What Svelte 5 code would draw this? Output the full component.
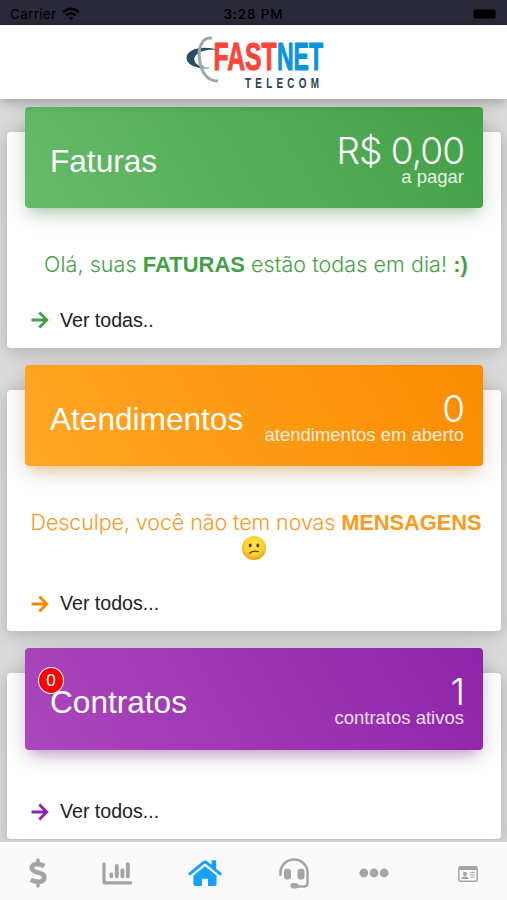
<script lang="ts">
  type Card = {
    title: string;
    tone: string;
    value: string;
    label: string;
    link: string;
    badge?: number;
  };

  const cards: Card[] = [
    { title: "Faturas", tone: "green", value: "R$ 0,00", label: "a pagar", link: "Ver todas.." },
    { title: "Atendimentos", tone: "orange", value: "0", label: "atendimentos em aberto", link: "Ver todos..." },
    { title: "Contratos", tone: "purple", value: "1", label: "contratos ativos", link: "Ver todos...", badge: 0 },
  ];

  const tabs = ["dollar", "chart", "home", "headset", "more", "profile"];
  let active = $state("home");
</script>

<div class="app">
  <div class="status">
    <div class="carrier">
      <span>Carrier</span>
      <svg width="18" height="14" viewBox="0 0 18 14" fill="none" stroke="#000" stroke-width="2.5">
        <path d="M1.2 5.2Q9-1.7 16.8 5.2M4.2 8.4Q9 4.1 13.8 8.4" />
        <path d="M6.6 10.7Q9 8.8 11.4 10.7L9 13.3Z" fill="#000" stroke="none" />
      </svg>
    </div>
    <span class="time">3:28 PM</span>
    <div class="power"><span class="battery"></span></div>
  </div>

  <header>
    <svg width="140" height="56" viewBox="0 0 140 56">
      <path d="M31 13C16 9.5 2.5 14 2.5 22C2.5 28 10 32 21 32.5C12 29 8.500 25 11 20.500C14 15.500 22 13 31 13.800Z" fill="#294b68" />
      <path d="M28 2.3C18 .5 14 12 15.5 23C17 36 23 45 34 45" fill="none" stroke="#97aaa5" stroke-width="3" />
      <path d="M17 29Q20 33 25 32" fill="none" stroke="#97aaa5" stroke-width="1.6" />
      <text x="29.5" y="33.5" textLength="63" lengthAdjust="spacingAndGlyphs" class="logo fast">FAST</text>
      <text x="93" y="33.5" textLength="46" lengthAdjust="spacingAndGlyphs" class="logo net">NET</text>
      <text transform="translate(61 51.5) scale(.66 1)" textLength="112" class="telecom">TELECOM</text>
    </svg>
  </header>

  <main>
    {#each cards as card}
      <section class="card {card.tone}">
        <div class="head">
          {#if card.badge !== undefined}
            <span class="badge">{card.badge}</span>
          {/if}
          <h2>{card.title}</h2>
          <div class="total">
            <span class="value">{card.value}</span>
            <span class="label">{card.label}</span>
          </div>
        </div>
        {#if card.tone === "green"}
          <p>Olá, suas <b>FATURAS</b> estão todas em dia! <b>:)</b></p>
        {:else if card.tone === "orange"}
          <p>Desculpe, você não tem novas <b>MENSAGENS</b></p>
          <svg class="emoji" width="24" height="24" viewBox="0 0 24 24">
            <defs>
              <radialGradient id="face" cx=".5" cy=".4" r=".6">
                <stop offset="0" stop-color="#ffea55" />
                <stop offset=".65" stop-color="#ffd12e" />
                <stop offset="1" stop-color="#ec9a10" />
              </radialGradient>
            </defs>
            <circle cx="12" cy="12" r="12" fill="url(#face)" />
            <ellipse cx="8.2" cy="9.4" rx="1.4" ry="1.9" fill="#5b3406" />
            <ellipse cx="15.8" cy="9.4" rx="1.4" ry="1.9" fill="#5b3406" />
            <path d="M7.7 17.2Q11 14 16.2 15.6" fill="none" stroke="#6b3d08" stroke-width="1.3" stroke-linecap="round" />
          </svg>
        {/if}
        <div class="link">
          <svg width="18" height="18" viewBox="0 0 18 18" fill="none" stroke="currentColor" stroke-width="2.8">
            <path d="M.5 9H16M8.3 1.5L15.8 9L8.3 16.5" />
          </svg>
          <a href="#{card.tone}">{card.link}</a>
        </div>
      </section>
    {/each}
  </main>

  <nav>
    {#each tabs as tab}
      <button type="button" class={tab} class:active={active === tab} aria-label={tab} onclick={() => (active = tab)}>
        {#if tab === "dollar"}
          <svg width="18" height="30" viewBox="0 0 18 30" fill="none" stroke="currentColor">
            <path d="M9 2V6M9 24V28" stroke-width="3.6" stroke-linecap="round" />
            <path d="M15.4 8C12.8 6.5 10.5 6.1 8 6.1C4.7 6.1 2.8 7.4 2.8 10C2.8 16 15.3 13 15.3 19.3C15.3 22.4 13 23.9 9.3 23.9C6.6 23.9 4.1 23.1 1.8 21.8" stroke-width="4.6" />
          </svg>
        {:else if tab === "chart"}
          <svg width="30" height="23" viewBox="0 0 30 23" fill="none" stroke="currentColor" stroke-linecap="round">
            <path d="M2 1.8V20.8H28.5" stroke-width="3.2" stroke-linejoin="round" />
            <path d="M9.3 12.5V14.3M14.8 4V14.3M20.4 8.2V14.3M25.8 2.2V14.3" stroke-width="3.9" />
          </svg>
        {:else if tab === "home"}
          <svg width="34" height="28" viewBox="0 0 34 28" fill="currentColor">
            <path d="M17 7.2L5.4 16.6V25Q5.4 27 7.4 27H14V19.7H20V27H26.6Q28.6 27 28.6 25V16.6Z" />
            <path d="M1.8 14.8L15.5 3.6Q17 2.4 18.5 3.6L32.2 14.8" fill="none" stroke="currentColor" stroke-width="3" stroke-linecap="round" />
            <path d="M23.6 1.2H28.2V10.8L23.6 7Z" />
          </svg>
        {:else if tab === "headset"}
          <svg width="30" height="31" viewBox="0 0 30 31" fill="none" stroke="currentColor">
            <path d="M1.5 17V14.5C1.5 7.2 7.8 1.5 15 1.5S28.5 7.2 28.5 14.5V25Q28.5 28.5 25 28.5H18" stroke-width="2.5" stroke-linecap="round" />
            <rect x="5" y="10.8" width="7" height="10.7" rx="3" fill="currentColor" stroke="none" />
            <rect x="18.5" y="10.8" width="7" height="10.7" rx="3" fill="currentColor" stroke="none" />
            <rect x="11.5" y="25" width="8" height="5.5" rx="2.7" fill="currentColor" stroke="none" />
          </svg>
        {:else if tab === "more"}
          <svg width="30" height="10" viewBox="0 0 30 10" fill="currentColor">
            <circle cx="4.8" cy="5" r="4.4" />
            <circle cx="15" cy="5" r="4.4" />
            <circle cx="25.2" cy="5" r="4.4" />
          </svg>
        {:else}
          <svg width="20" height="16" viewBox="0 0 20 16" fill="none" stroke="currentColor">
            <rect x=".8" y=".8" width="18.4" height="14.4" rx="1.5" stroke-width="1.4" />
            <path d="M1 2.5H19" stroke-width="3" />
            <circle cx="7" cy="7.8" r="2.1" fill="currentColor" stroke="none" />
            <path d="M3.5 13Q3.8 10.6 7 10.6T10.5 13Z" fill="currentColor" stroke="none" />
            <path d="M12.2 6.5H16.5M12.2 8.8H16.5M12.2 11H16.5" stroke-width="1" />
          </svg>
        {/if}
      </button>
    {/each}
  </nav>
</div>

<style>
  :global(body) {
    margin: 0;
  }

  .app {
    display: flex;
    flex-direction: column;
    width: 507px;
    height: 900px;
    overflow: hidden;
    background: #dadada;
    font-family: "Liberation Sans", Arial, sans-serif;
    color: #222;
  }

  .status {
    display: grid;
    grid-template-columns: 1fr auto 1fr;
    align-items: center;
    flex: 0 0 25px;
    padding: 2px 10px 0;
    box-sizing: border-box;
    background: #29293a;
    color: #000;
    font-family: Inter, sans-serif;
    font-size: 13.5px;
  }

  .carrier {
    display: flex;
    align-items: center;
    gap: 6px;
    letter-spacing: 0.3px;
  }

  .time {
    font-weight: 500;
    letter-spacing: 0.85px;
  }

  .power {
    display: flex;
    justify-content: flex-end;
  }

  .battery {
    width: 23px;
    height: 10px;
    margin-right: 1px;
    border: 1px solid #11111a;
    box-sizing: border-box;
    border-radius: 3px;
    background: #000;
  }

  header {
    display: flex;
    justify-content: center;
    flex: 0 0 73.5px;
    padding-top: 11px;
    box-sizing: border-box;
    background: #fff;
    box-shadow: 0 2px 12px rgba(0, 0, 0, 0.3);
    z-index: 1;
  }

  header svg {
    overflow: visible;
  }

  .logo {
    font: bold 39px/1 "Liberation Sans", sans-serif;
    stroke-width: 1.1px;
  }

  .fast {
    fill: #fb453c;
    stroke: #fb453c;
  }

  .net {
    fill: #0b93dc;
    stroke: #0b93dc;
  }

  .telecom {
    font: bold 15px/1 "Liberation Sans", sans-serif;
    fill: #294257;
  }

  main {
    display: flex;
    flex-direction: column;
    flex: 1;
    min-height: 0;
    gap: 42px;
    padding: 33px 6px 0 7px;
  }

  .card {
    display: flex;
    flex-direction: column;
    flex: 0 0 216px;
    padding: 0 18px;
    box-sizing: border-box;
    border-radius: 4px;
    background: #fff;
    box-shadow: 0 3px 16px rgba(0, 0, 0, 0.2);
  }

  .orange {
    flex-basis: 241.5px;
  }

  .purple {
    flex-basis: 166px;
  }

  .head {
    position: relative;
    display: flex;
    align-items: center;
    justify-content: space-between;
    flex: 0 0 101.5px;
    margin-top: -24.8px;
    padding: 0 19px 0 25px;
    box-sizing: border-box;
    border-radius: 4px;
    color: #fff;
  }

  .green .head {
    background: linear-gradient(60deg, #66bb6a, #43a047);
    box-shadow: 0 5px 26px rgba(0, 0, 0, 0.14), 0 9px 13px -6px rgba(76, 175, 80, 0.4);
  }

  .orange .head {
    background: linear-gradient(60deg, #ffa726, #fb8c00);
    box-shadow: 0 5px 26px rgba(0, 0, 0, 0.14), 0 9px 13px -6px rgba(255, 152, 0, 0.4);
  }

  .purple .head {
    background: linear-gradient(60deg, #ab47bc, #8e24aa);
    box-shadow: 0 5px 26px rgba(0, 0, 0, 0.14), 0 9px 13px -6px rgba(156, 39, 176, 0.4);
  }

  h2 {
    margin: 7px 0 0;
    font-size: 31.6px;
    font-weight: 400;
    line-height: 38px;
  }

  .total {
    display: flex;
    flex-direction: column;
    align-items: flex-end;
    padding-top: 6px;
  }

  .value {
    font: 300 37px/32px Inter, sans-serif;
    letter-spacing: -1px;
  }

  .label {
    font-size: 18.5px;
    line-height: 19px;
    opacity: 0.85;
  }

  .badge {
    position: absolute;
    left: 13px;
    top: 19px;
    z-index: 1;
    width: 26px;
    height: 27px;
    border: 1px solid #fff;
    border-radius: 50%;
    box-sizing: border-box;
    background: #f00;
    font-size: 17px;
    line-height: 25px;
    text-align: center;
  }

  p {
    margin: 43px 0 0;
    font: 300 21.5px/26px Inter, sans-serif;
    text-align: center;
    white-space: nowrap;
  }

  b {
    font: bold 21.9px/1 "Liberation Sans", sans-serif;
  }

  .green p {
    padding-left: 4px;
    color: #43a047;
    letter-spacing: 0.07px;
  }

  .orange p {
    padding-left: 4px;
    color: #fb9a1c;
    letter-spacing: -0.1px;
  }

  .emoji {
    align-self: center;
    margin-top: 1px;
  }

  .link {
    display: flex;
    align-items: center;
    gap: 11px;
    height: 26px;
    margin: auto 0 14.5px 6px;
    font-size: 19.6px;
  }

  .green .link {
    color: #43a047;
  }

  .orange .link {
    color: #fb8c00;
  }

  .purple .link {
    color: #8e24aa;
  }

  .link a {
    color: #222;
    text-decoration: none;
  }

  nav {
    display: grid;
    grid-template-columns: 75px 84px 91px 87px 74px 1fr;
    flex: 0 0 60px;
    box-sizing: border-box;
    border-top: 2px solid #d2d2d2;
    background: #fafafa;
    z-index: 1;
  }

  button {
    display: flex;
    align-items: center;
    justify-content: center;
    padding: 4px 0 0;
    border: 0;
    background: none;
    color: #a5a5a5;
  }

  .profile {
    padding: 6px 0 0 18px;
  }

  .active {
    color: #18a0fb;
  }

  .card svg,
  nav svg {
    flex: none;
  }
</style>
